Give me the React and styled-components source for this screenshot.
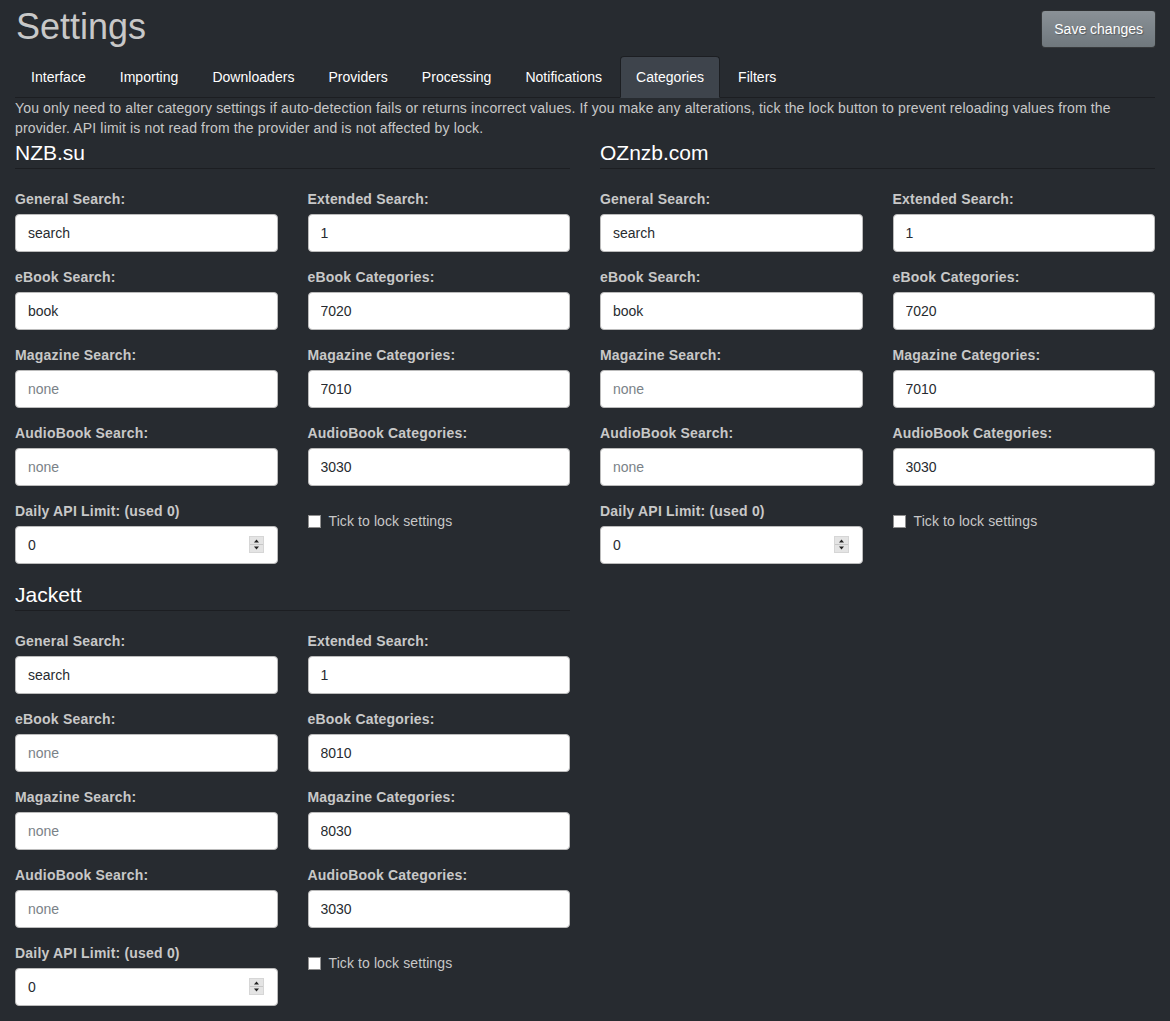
import React from "react";
import styled, { createGlobalStyle } from "styled-components";

const GlobalStyle = createGlobalStyle`
  * { box-sizing: border-box; }
  html, body { margin: 0; padding: 0; background: #272b30; }
  body {
    font-family: "Liberation Sans", Helvetica, Arial, sans-serif;
    font-size: 14px;
    line-height: 20px;
    color: #c8c8c8;
  }
`;

const Container = styled.div`
  width: 1170px;
  padding: 0 15px;
`;

const Header = styled.header`
  display: flex;
  justify-content: space-between;
  align-items: flex-start;
`;

const Title = styled.h1`
  margin: 7px 0 9px 1px;
  font-size: 36px;
  line-height: 40px;
  font-weight: 400;
  color: #c8c8c8;
`;

const SaveButton = styled.button`
  margin-top: 10px;
  margin-right: -1px;
  height: 38px;
  padding: 8px 12px;
  font-family: inherit;
  font-size: 14px;
  line-height: 20px;
  color: #fff;
  text-shadow: 1px 1px 1px rgba(0, 0, 0, 0.3);
  background-image: linear-gradient(#8a9196, #7a8288 60%, #70787d);
  border: 1px solid rgba(0, 0, 0, 0.6);
  border-radius: 4px;
  cursor: pointer;
`;

const Tabs = styled.ul`
  display: flex;
  list-style: none;
  margin: 0;
  padding: 0;
  border-bottom: 1px solid #1c1e22;
`;

const Tab = styled.li`
  margin-right: 2px;
  margin-bottom: -1px;
  padding: 10px 15px;
  line-height: 20px;
  letter-spacing: 0.03px;
  color: #fff;
  border: 1px solid ${(p) => (p.$active ? "#1c1e22" : "transparent")};
  border-bottom-color: ${(p) => (p.$active ? "#3e444c" : "transparent")};
  border-radius: 4px 4px 0 0;
  background: ${(p) => (p.$active ? "#3e444c" : "transparent")};
  cursor: pointer;
`;

const Intro = styled.p`
  margin: 0;
  letter-spacing: 0.15px;
  color: #c8c8c8;
`;

const Columns = styled.div`
  display: grid;
  grid-template-columns: 1fr 1fr;
  column-gap: 30px;
`;

const Section = styled.section`
  padding-bottom: 1px;
`;

const Legend = styled.div`
  font-size: 21px;
  line-height: 30px;
  color: #fff;
  border-bottom: 1px solid #1c1e22;
  margin-bottom: 20px;
`;

const Fields = styled.div`
  display: grid;
  grid-template-columns: 1fr 1fr;
  column-gap: 30px;
`;

const FormGroup = styled.div`
  margin-bottom: 15px;
`;

const Label = styled.label`
  display: block;
  margin-bottom: 5px;
  font-weight: 700;
  letter-spacing: 0.2px;
  color: #c8c8c8;
`;

const Input = styled.input`
  display: block;
  width: 100%;
  height: 38px;
  padding: 8px 12px;
  font-family: inherit;
  font-size: 14px;
  line-height: 20px;
  color: #272b30;
  background: #fff;
  border: 1px solid #bbb;
  border-radius: 4px;
  outline: none;
  &::placeholder { color: #7a8288; opacity: 1; }
`;

const NumberWrap = styled.div`
  position: relative;
`;

const SpinnerBox = styled.svg`
  position: absolute;
  right: 14px;
  top: 10px;
`;

const CheckRow = styled.label`
  display: flex;
  align-items: center;
  margin-top: 10px;
  min-height: 20px;
  letter-spacing: 0.1px;
  color: #c8c8c8;
  cursor: pointer;
`;

const CheckBox = styled.input`
  appearance: none;
  width: 13px;
  height: 13px;
  margin: 0 8px 0 0;
  background: #fff;
  border: 1px solid #8f8f8f;
  border-radius: 0;
`;

const Spinner = () => (
  <SpinnerBox width="15" height="17" viewBox="0 0 15 17">
    <rect x="0.5" y="0.5" width="14" height="16" fill="#ececec" stroke="#d6d6d6" />
    <rect x="1" y="1" width="13" height="7" fill="#e4e4e4" />
    <rect x="1" y="9" width="13" height="7" fill="#e4e4e4" />
    <line x1="1" y1="8.5" x2="14" y2="8.5" stroke="#c8c8c8" />
    <path d="M5 6.5 L10 6.5 L7.5 3.5 Z" fill="#222" />
    <path d="M5 10.5 L10 10.5 L7.5 13.5 Z" fill="#222" />
  </SpinnerBox>
);

const Field = ({ label, value, placeholder }) => (
  <FormGroup>
    <Label>{label}</Label>
    <Input type="text" defaultValue={value} placeholder={placeholder} />
  </FormGroup>
);

const Provider = ({ name, d }) => (
  <Section>
    <Legend>{name}</Legend>
    <Fields>
      <Field label="General Search:" value={d.general} placeholder="none" />
      <Field label="Extended Search:" value={d.extended} placeholder="none" />
      <Field label="eBook Search:" value={d.book} placeholder="none" />
      <Field label="eBook Categories:" value={d.bookCat} placeholder="none" />
      <Field label="Magazine Search:" value={d.mag} placeholder="none" />
      <Field label="Magazine Categories:" value={d.magCat} placeholder="none" />
      <Field label="AudioBook Search:" value={d.audio} placeholder="none" />
      <Field label="AudioBook Categories:" value={d.audioCat} placeholder="none" />
      <FormGroup>
        <Label>Daily API Limit: (used 0)</Label>
        <NumberWrap>
          <Input type="text" defaultValue="0" />
          <Spinner />
        </NumberWrap>
      </FormGroup>
      <div>
        <CheckRow>
          <CheckBox type="checkbox" />
          Tick to lock settings
        </CheckRow>
      </div>
    </Fields>
  </Section>
);

const tabs = [
  "Interface",
  "Importing",
  "Downloaders",
  "Providers",
  "Processing",
  "Notifications",
  "Categories",
  "Filters",
];

const providers = [
  {
    name: "NZB.su",
    d: { general: "search", extended: "1", book: "book", bookCat: "7020", mag: "", magCat: "7010", audio: "", audioCat: "3030" },
  },
  {
    name: "OZnzb.com",
    d: { general: "search", extended: "1", book: "book", bookCat: "7020", mag: "", magCat: "7010", audio: "", audioCat: "3030" },
  },
  {
    name: "Jackett",
    d: { general: "search", extended: "1", book: "", bookCat: "8010", mag: "", magCat: "8030", audio: "", audioCat: "3030" },
  },
];

export default function App() {
  return (
    <>
      <GlobalStyle />
      <Container>
        <Header>
          <Title>Settings</Title>
          <SaveButton>Save changes</SaveButton>
        </Header>
        <Tabs>
          {tabs.map((t) => (
            <Tab key={t} $active={t === "Categories"}>
              {t}
            </Tab>
          ))}
        </Tabs>
        <Intro>
          You only need to alter category settings if auto-detection fails or returns incorrect values. If you make any
          alterations, tick the lock button to prevent reloading values from the provider. API limit is not read from the
          provider and is not affected by lock.
        </Intro>
        <Columns>
          {providers.map((p) => (
            <Provider key={p.name} name={p.name} d={p.d} />
          ))}
        </Columns>
      </Container>
    </>
  );
}
